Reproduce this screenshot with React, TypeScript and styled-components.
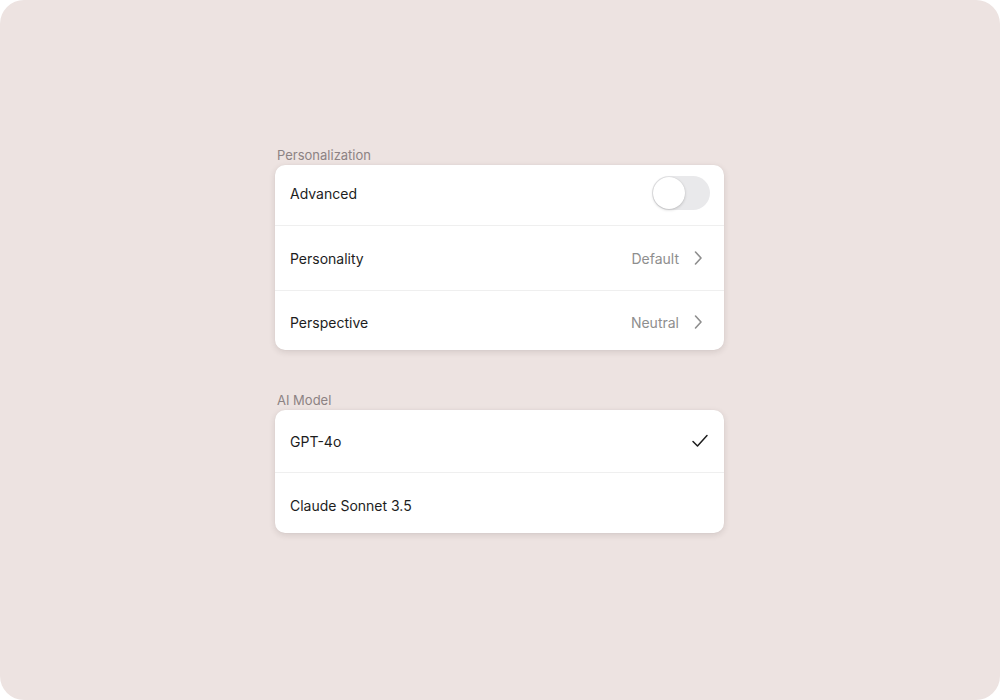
import React from "react";
import styled, { createGlobalStyle } from "styled-components";

const Global = createGlobalStyle`
  html, body { margin: 0; padding: 0; background: #ffffff; }
  body { font-family: Inter, "Noto Sans", sans-serif; -webkit-font-smoothing: antialiased; }
`;

const Frame = styled.div`
  width: 1000px;
  height: 700px;
  background: #ede3e1;
  border-radius: 24px;
  display: flex;
  flex-direction: column;
  align-items: flex-start;
  padding: 146px 0 0 275px;
  box-sizing: border-box;
`;

const Group = styled.section`
  width: 449px;
  display: flex;
  flex-direction: column;
  margin-bottom: 41px;
`;

const GroupLabel = styled.div`
  font-size: 13px;
  line-height: 18px;
  color: #8c8283;
  padding-left: 2px;
  margin-bottom: 1px;
`;

const Card = styled.div`
  background: #ffffff;
  border-radius: 10px;
  box-shadow: 0 2px 6px rgba(60, 40, 40, 0.14), 0 0 1px rgba(60, 40, 40, 0.08);
  display: flex;
  flex-direction: column;
  overflow: hidden;
`;

const Row = styled.div<{ $h: number; $divider?: boolean; $shift?: number }>`
  height: ${(p) => p.$h}px;
  display: flex;
  align-items: center;
  justify-content: space-between;
  padding: ${(p) => {
    const s = p.$shift ?? 0;
    return s >= 0 ? `${s}px 21px 0 15px` : `0 21px ${-s}px 15px`;
  }};
  border-top: ${(p) => (p.$divider ? "1px solid #efefef" : "none")};
  box-sizing: border-box;
`;

const RowTitle = styled.span`
  font-size: 14px;
  color: #1d1d1d;
`;

const RowRight = styled.div`
  display: flex;
  align-items: center;
  gap: 14px;
`;

const Value = styled.span`
  font-size: 14px;
  color: #8e8e8e;
`;

const Track = styled.div`
  width: 58px;
  height: 34px;
  border-radius: 17px;
  background: #e9e9eb;
  position: relative;
  margin-right: -7px;
`;

const Knob = styled.div`
  position: absolute;
  left: 1px;
  top: 1px;
  width: 32px;
  height: 32px;
  border-radius: 50%;
  background: #ffffff;
  box-shadow: 0 1px 3px rgba(0, 0, 0, 0.18), 0 0 1px rgba(0, 0, 0, 0.12);
`;

const Chevron = () => (
  <svg width="10" height="16" viewBox="0 0 10 16" fill="none">
    <path d="M2.5 2 L8 8 L2.5 14" stroke="#8e8e8e" strokeWidth="1.6" strokeLinecap="round" strokeLinejoin="round" />
  </svg>
);

const Check = () => (
  <svg width="18" height="16" viewBox="0 0 18 16" fill="none" style={{ marginRight: -6 }}>
    <path d="M2 8.5 L6.5 13 L16 2.5" stroke="#1d1d1d" strokeWidth="1.5" strokeLinecap="round" strokeLinejoin="round" />
  </svg>
);

export default function App() {
  return (
    <>
      <Global />
      <Frame>
        <Group>
          <GroupLabel>Personalization</GroupLabel>
          <Card>
            <Row $h={60} $shift={-4}>
              <RowTitle>Advanced</RowTitle>
              <Track>
                <Knob />
              </Track>
            </Row>
            <Row $h={65} $divider>
              <RowTitle>Personality</RowTitle>
              <RowRight>
                <Value>Default</Value>
                <Chevron />
              </RowRight>
            </Row>
            <Row $h={60} $divider $shift={3}>
              <RowTitle>Perspective</RowTitle>
              <RowRight>
                <Value>Neutral</Value>
                <Chevron />
              </RowRight>
            </Row>
          </Card>
        </Group>
        <Group>
          <GroupLabel>AI Model</GroupLabel>
          <Card>
            <Row $h={62}>
              <RowTitle>GPT-4o</RowTitle>
              <Check />
            </Row>
            <Row $h={61} $divider $shift={4}>
              <RowTitle>Claude Sonnet 3.5</RowTitle>
            </Row>
          </Card>
        </Group>
      </Frame>
    </>
  );
}
